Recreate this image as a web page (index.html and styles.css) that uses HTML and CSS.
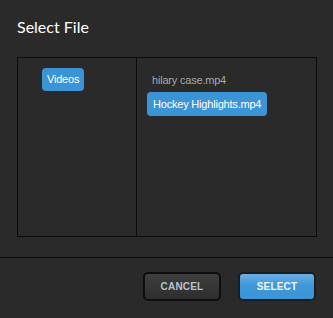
FILE: index.html
```html
<!DOCTYPE html>
<html lang="en">
<head>
    <meta charset="UTF-8">
    <title>Select File</title>
    <link rel="stylesheet" href="styles.css">
</head>
<body>
    <div class="dialog">
        <h1 class="dialog-title">Select File</h1>

        <div class="browser">
            <div class="pane pane-folders">
                <span class="item item-selected">Videos</span>
            </div>
            <div class="pane pane-files">
                <span class="item">hilary case.mp4</span>
                <span class="item item-selected">Hockey Highlights.mp4</span>
            </div>
        </div>

        <div class="dialog-footer">
            <button class="btn btn-cancel">CANCEL</button>
            <button class="btn btn-select">SELECT</button>
        </div>
    </div>
</body>
</html>
```

FILE: styles.css
```css
* { box-sizing: border-box; margin: 0; padding: 0; }

body {
    background: #2a2a2a;
    font-family: "Liberation Sans", Arial, sans-serif;
}

.dialog {
    width: 333px;
    height: 318px;
    display: flex;
    flex-direction: column;
}

.dialog-title {
    font-family: Lato, "Open Sans", sans-serif;
    font-weight: 400;
    font-size: 16px;
    color: #ffffff;
    padding: 17px 0 0 17px;
    height: 57px;
}

/* two column file browser */
.browser {
    margin: 0 16px 0 17px;
    height: 180px;
    border: 1px solid #0c0c0c;
    display: grid;
    grid-template-columns: 119px 1fr;
}

.pane {
    display: flex;
    flex-direction: column;
    align-items: flex-start;
}

.pane-folders {
    border-right: 1px solid #0c0c0c;
    padding: 10px 0 0 24px;
}

.pane-files {
    padding: 12px 0 0 10px;
    gap: 2px;
}

.item {
    font-size: 11px;
    letter-spacing: -0.2px;
    color: #a8a8a8;
    padding: 0 5px;
    height: 23px;
    line-height: 23px;
    white-space: nowrap;
}

.item-selected {
    background: #3a94d6;
    color: #ffffff;
    border-radius: 4px;
}

.pane-files .item-selected { height: 24px; line-height: 24px; padding: 0 6px; }
.pane-files .item:first-child { height: 20px; line-height: 20px; }

.dialog-footer {
    margin-top: 20px;
    border-top: 1px solid #0c0c0c;
    display: flex;
    justify-content: flex-end;
    gap: 17px;
    padding: 14px 17px 0 0;
}

.btn {
    width: 78px;
    height: 29px;
    border: 2px solid #0e0e0e;
    border-radius: 5px;
    font-family: "Liberation Sans", Arial, sans-serif;
    font-weight: 700;
    font-size: 10px;
    letter-spacing: 0.2px;
}

.btn-cancel {
    background: linear-gradient(#3e3e3e, #2e2e2e);
    color: #b9c2cb;
}

.btn-select {
    background: linear-gradient(#6cb0e4, #3e98d8 45%, #3a94d6);
    color: #eef5fb;
    border-color: #1a1d20;
}
```
